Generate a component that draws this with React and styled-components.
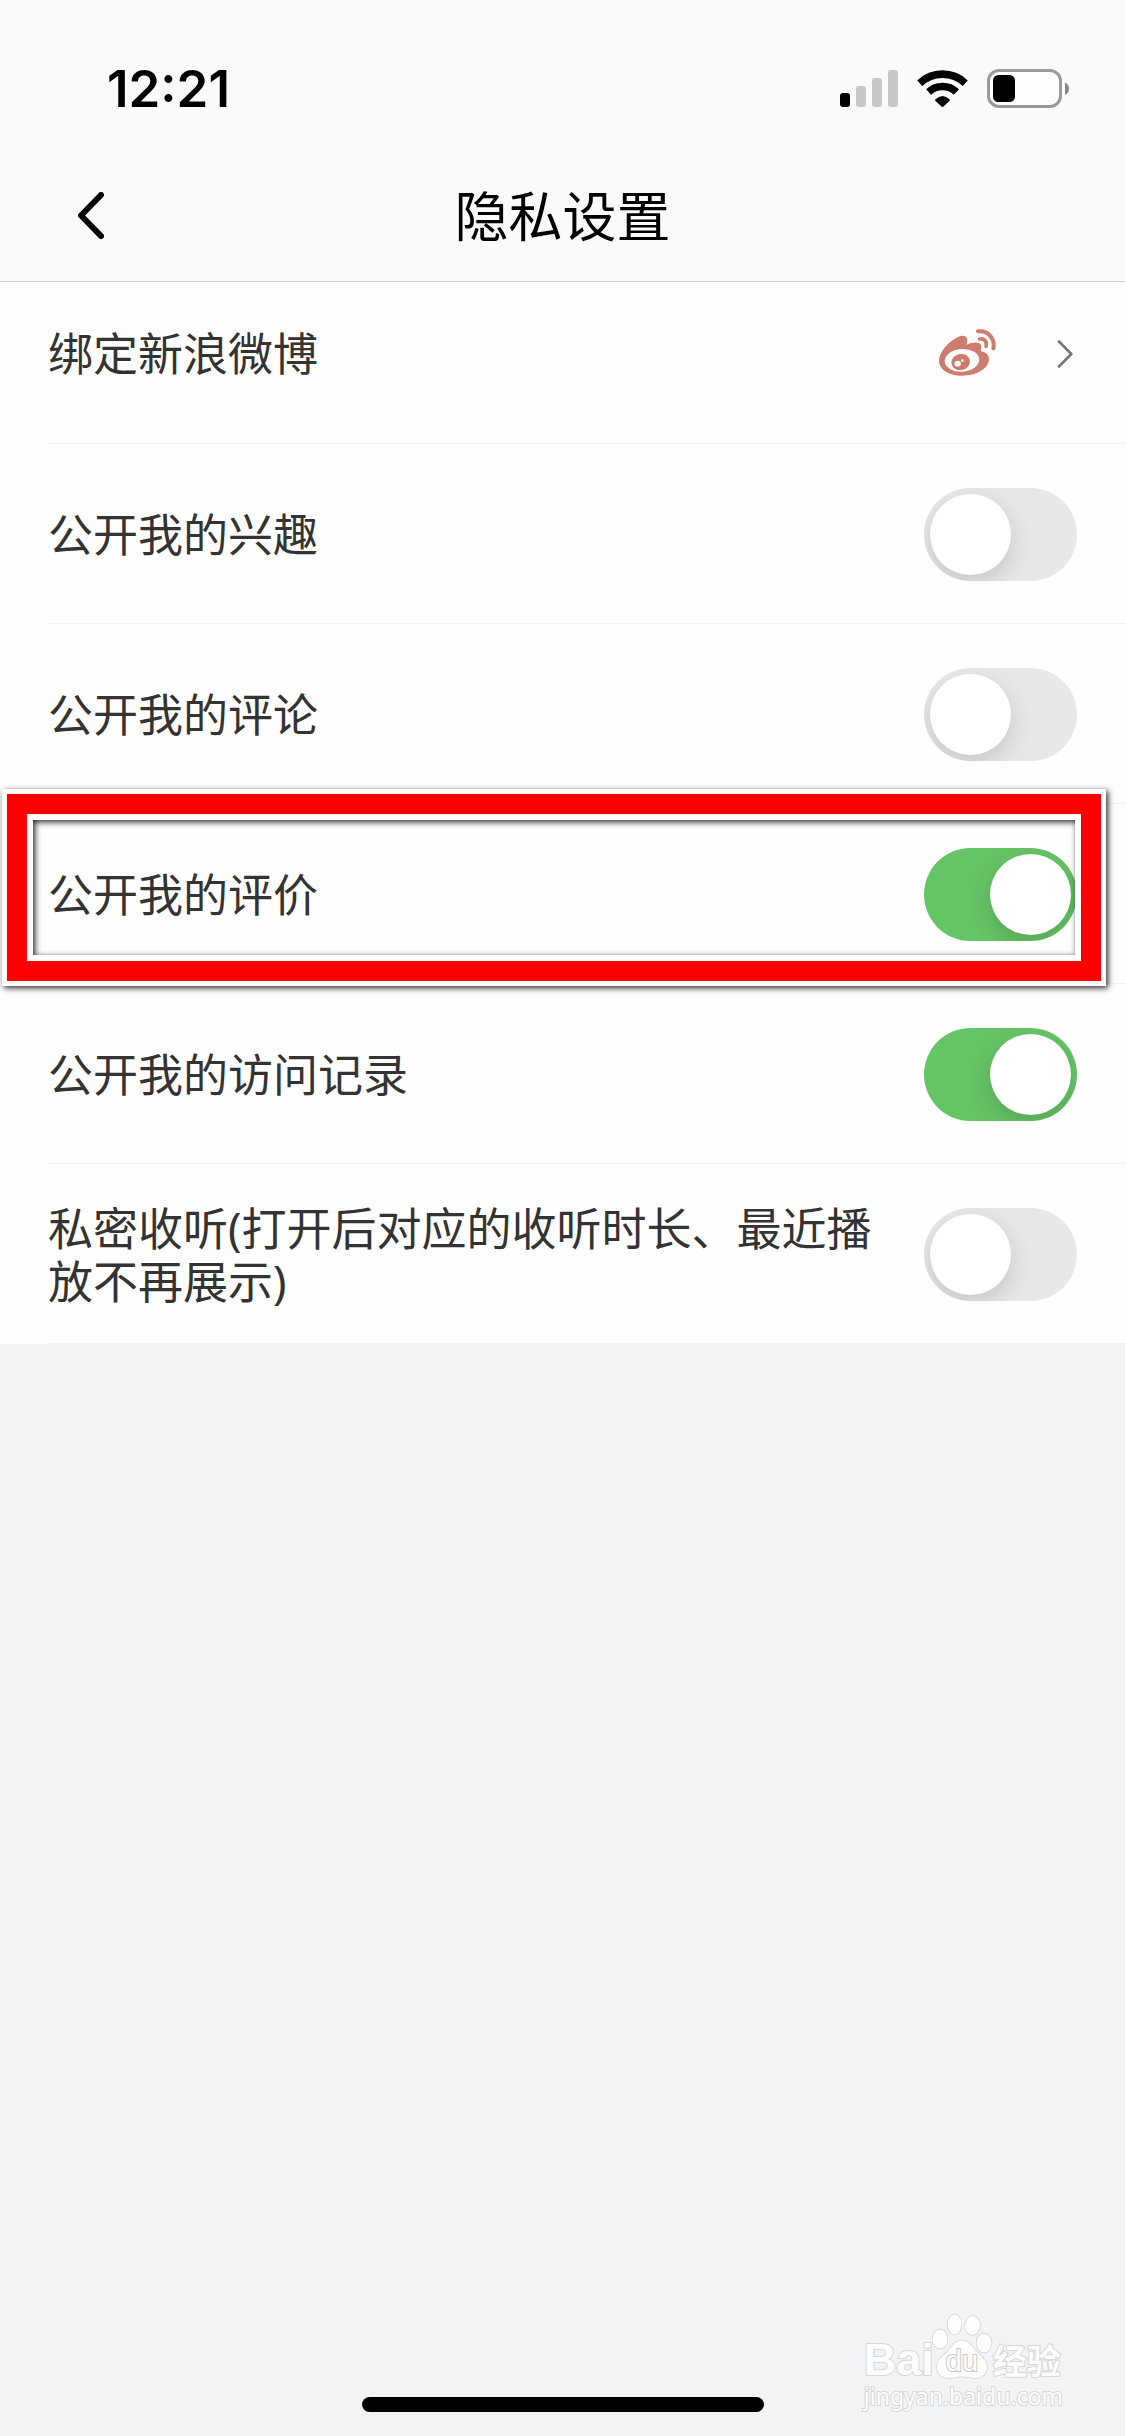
import React, { useState } from 'react';
import styled, { createGlobalStyle } from 'styled-components';

const GlobalStyle = createGlobalStyle`
  * { box-sizing: border-box; }
  body {
    margin: 0;
    background: #f2f3f5;
    font-family: "Noto Sans", "Noto Sans CJK SC", sans-serif;
    color: #333;
  }
`;

const Page = styled.div`
  position: relative;
  display: flex;
  flex-direction: column;
  min-height: 100vh;
  overflow: hidden;
`;

const Header = styled.header`
  background: #fafafa;
  border-bottom: 1px solid #ccc;
`;

const StatusBar = styled.div`
  display: flex;
  align-items: center;
  justify-content: space-between;
  height: 150px;
  padding: 27px 56px 0 107px;
`;

const Clock = styled.time`
  font: 600 51px/60px Inter, sans-serif;
  color: #000;
`;

const StatusIcons = styled.div`
  display: flex;
  align-items: center;
  gap: 19px;
`;

const NavBar = styled.div`
  display: grid;
  grid-template-columns: 120px 1fr 120px;
  align-items: center;
  height: 131px;
`;

const BackButton = styled.button`
  display: flex;
  align-items: center;
  height: 100px;
  padding: 0 0 0 76px;
  border: 0;
  background: none;
`;

const Title = styled.h1`
  margin: 0;
  padding-bottom: 4px;
  font-family: "Noto Sans CJK SC", sans-serif;
  font-size: 54px;
  font-weight: 400;
  line-height: 80px;
  text-align: center;
  color: #000;
`;

const List = styled.ul`
  margin: 0;
  padding: 0;
  list-style: none;
  background: #fefefe;
`;

const Item = styled.li`
  position: relative;
  padding-left: 48px;
`;

const Row = styled.label`
  display: flex;
  align-items: center;
  justify-content: space-between;
  gap: 24px;
  min-height: 180px;
  padding: 2px 48px 0 0;
  border-bottom: 1px solid #f2f2f2;
`;

const LinkRow = styled.a`
  display: flex;
  align-items: center;
  justify-content: space-between;
  min-height: 162px;
  padding: 0 52px 18px 0;
  border-bottom: 1px solid #f2f2f2;
  color: inherit;
  text-decoration: none;
`;

const Label = styled.span`
  font-size: 45px;
  line-height: 53px;
`;

const LinkEnd = styled.span`
  display: flex;
  align-items: center;
  gap: 60px;
`;

const Switch = styled.input`
  appearance: none;
  flex: none;
  width: 153px;
  height: 93px;
  margin: 0;
  padding: 6px;
  border-radius: 47px;
  background: #e8e8e8;
  overflow: hidden;
  contain: paint;

  &::before {
    content: "";
    display: block;
    width: 81px;
    height: 81px;
    border-radius: 50%;
    background: #fff;
    box-shadow: 0 9px 24px rgba(0, 0, 0, 0.15);
  }

  &:checked { background: #65c466; }
  &:checked::before { margin-left: auto; }
`;

const Highlight = styled.div`
  position: absolute;
  inset: -10px 24px 3px 7px;
  border: 20px solid #f00;
  box-shadow:
    0 0 0 5px #fff,
    2px 2px 6px 5px rgba(0, 0, 0, 0.85),
    inset 0 0 0 6px #fff,
    inset 2px 2px 6px 6px rgba(0, 0, 0, 0.85);
  pointer-events: none;
`;

const Footer = styled.footer`
  display: flex;
  justify-content: center;
  margin-top: auto;
  padding-bottom: 24px;
`;

const HomeIndicator = styled.div`
  width: 402px;
  height: 15px;
  border-radius: 8px;
  background: #000;
`;

const Watermark = styled.div`
  position: absolute;
  right: 62px;
  bottom: 25px;
  color: #fcfdfd;
  -webkit-text-stroke: 2px #d6d7d7;
  paint-order: stroke fill;
`;

const Brand = styled.div`
  display: flex;
  align-items: flex-end;
`;

const BrandLatin = styled.span`
  margin-right: -3px;
  font: 700 45px/42px "Liberation Sans", sans-serif;
`;

const BrandHan = styled.span`
  font-family: "Noto Sans CJK SC", sans-serif;
  font-size: 34px;
  font-weight: 700;
  line-height: 42px;
`;

const Site = styled.div`
  font: 400 23px/30px "Noto Sans", sans-serif;
`;

const SignalIcon = () => (
  <svg width="58" height="38" viewBox="0 0 58 38" aria-hidden="true">
    <rect x="0" y="23" width="10" height="14" rx="3" fill="#000" />
    <rect x="16" y="16" width="10" height="21" rx="3" fill="#c8c8c8" />
    <rect x="32" y="8" width="10" height="29" rx="3" fill="#c8c8c8" />
    <rect x="48" y="0" width="10" height="37" rx="3" fill="#c8c8c8" />
  </svg>
);

const WifiIcon = () => (
  <svg width="51" height="38" viewBox="0 0 51 38" aria-hidden="true">
    <g fill="none" stroke="#000" strokeWidth="7.6">
      <path d="M2.8 13.2A33 33 0 0 1 48.2 13.2" />
      <path d="M11.6 22A20.5 20.5 0 0 1 39.4 22" />
    </g>
    <path d="M18.3 29.6Q25.5 22.6 32.7 29.6Q33.2 30.2 32.7 30.7L26.2 36.8Q25.5 37.4 24.8 36.8L18.3 30.7Q17.8 30.2 18.3 29.6Z" fill="#000" />
  </svg>
);

const BatteryIcon = () => (
  <svg width="82" height="39" viewBox="0 0 82 39" aria-hidden="true">
    <rect x="1.5" y="1.5" width="72" height="36" rx="10.5" fill="#fefefe" stroke="#999" strokeWidth="3" />
    <rect x="6" y="6" width="22" height="27" rx="5.5" fill="#000" />
    <path d="M78 13.5Q82 15.5 82 19.5Q82 24 78 26Z" fill="#888" />
  </svg>
);

const BackIcon = () => (
  <svg width="28" height="48" viewBox="0 0 28 48" aria-hidden="true">
    <path d="M25 3L5 23.5L25 44" fill="none" stroke="#000" strokeWidth="6" strokeLinecap="round" strokeLinejoin="round" />
  </svg>
);

const ForwardIcon = () => (
  <svg width="16" height="28" viewBox="0 0 16 28" aria-hidden="true">
    <path d="M2 1.5L14.3 14L2 26.5" fill="none" stroke="#777" strokeWidth="2.6" strokeLinecap="round" strokeLinejoin="round" />
  </svg>
);

const WeiboIcon = () => (
  <svg width="58" height="50" viewBox="117 57 174 150" aria-hidden="true">
    <path d="M117 152C118 125 150 88 182 78C198 74 206 84 200 104C218 96 240 94 244 108C245 114 243 118 242 123C262 128 268 138 267 150C264 178 226 197 188 197C148 197 117 180 117 152Z" fill="#cd7d6d" />
    <ellipse cx="186" cy="151" rx="52" ry="34" transform="rotate(-4 186 151)" fill="#fefefe" />
    <ellipse cx="182" cy="156" rx="28" ry="24" transform="rotate(-12 182 156)" fill="#cd7d6d" />
    <ellipse cx="173" cy="161" rx="9.5" ry="8.5" fill="#fefefe" />
    <circle cx="187" cy="152" r="4" fill="#fefefe" />
    <g fill="none" stroke="#cd7d6d" strokeLinecap="round">
      <path d="M234 64C263 60 286 85 280 115" strokeWidth="12" />
      <path d="M239 87C252 84 262 95 258 109" strokeWidth="11" />
    </g>
  </svg>
);

const PawIcon = () => (
  <svg width="62" height="68" viewBox="0 0 62 68" aria-hidden="true">
    <g fill="#fcfdfd" stroke="#d0d1d1" strokeWidth="1.4">
      <ellipse cx="9" cy="26" rx="7.5" ry="9.5" />
      <ellipse cx="23.5" cy="11.5" rx="7" ry="10" />
      <ellipse cx="41.5" cy="12.5" rx="7.5" ry="9.5" />
      <ellipse cx="53" cy="30" rx="7.5" ry="9.5" />
      <path d="M31 27.5C24 27.5 21 33 17 38C12 43 6 46 6 54C6 61 11 65 18 65C23 65 26 63.5 31 63.5C36 63.5 39 65 44 65C51 65 56 61 56 54C56 46 49 43 45 38C41 33 38 27.5 31 27.5Z" />
    </g>
    <text x="31" y="58" textAnchor="middle" fontFamily="Liberation Sans, sans-serif" fontSize="29" fill="#fcfdfd" stroke="#c8c9c9" strokeWidth="2" paintOrder="stroke">du</text>
  </svg>
);

const settings = [
  { id: 'interest', label: '公开我的兴趣', on: false },
  { id: 'comment', label: '公开我的评论', on: false },
  { id: 'rating', label: '公开我的评价', on: true, highlighted: true },
  { id: 'visit', label: '公开我的访问记录', on: true },
  { id: 'private', label: '私密收听(打开后对应的收听时长、最近播放不再展示)', on: false },
];

function SettingItem({ id, label, on, highlighted }) {
  const [checked, setChecked] = useState(on);
  return (
    <Item>
      <Row htmlFor={id}>
        <Label>{label}</Label>
        <Switch
          id={id}
          type="checkbox"
          role="switch"
          checked={checked}
          onChange={(e) => setChecked(e.target.checked)}
        />
      </Row>
      {highlighted && <Highlight />}
    </Item>
  );
}

export default function App() {
  return (
    <Page>
      <GlobalStyle />
      <Header>
        <StatusBar>
          <Clock>12:21</Clock>
          <StatusIcons>
            <SignalIcon />
            <WifiIcon />
            <BatteryIcon />
          </StatusIcons>
        </StatusBar>
        <NavBar>
          <BackButton type="button" aria-label="返回">
            <BackIcon />
          </BackButton>
          <Title>隐私设置</Title>
        </NavBar>
      </Header>
      <List>
        <Item>
          <LinkRow href="#weibo">
            <Label>绑定新浪微博</Label>
            <LinkEnd>
              <WeiboIcon />
              <ForwardIcon />
            </LinkEnd>
          </LinkRow>
        </Item>
        {settings.map((setting) => (
          <SettingItem key={setting.id} {...setting} />
        ))}
      </List>
      <Footer>
        <HomeIndicator />
      </Footer>
      <Watermark>
        <Brand>
          <BrandLatin>Bai</BrandLatin>
          <PawIcon />
          <BrandHan>经验</BrandHan>
        </Brand>
        <Site>jingyan.baidu.com</Site>
      </Watermark>
    </Page>
  );
}
